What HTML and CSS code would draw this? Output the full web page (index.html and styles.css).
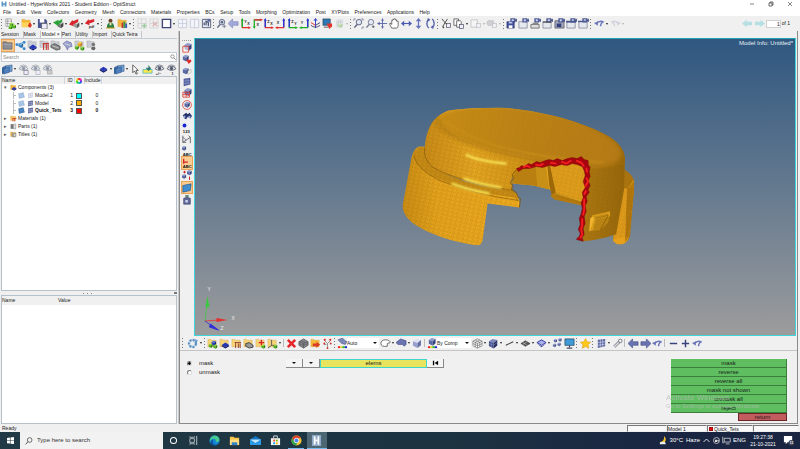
FILE: index.html
```html
<!DOCTYPE html>
<html lang="en">
<head>
<meta charset="utf-8">
<title>Untitled - HyperWorks 2021 - Student Edition - OptiStruct</title>
<link rel="stylesheet" href="styles.css">
</head>
<body>
<header class="titlebar">
  <span class="ic logo" data-icon="hw"></span>
  <span class="title">Untitled - HyperWorks 2021 - Student Edition - OptiStruct</span>
  <button class="win" aria-label="Minimize"><svg viewBox="0 0 6 6"><path d="M1 3h4" stroke="#333" stroke-width=".6"/></svg></button>
  <button class="win" aria-label="Restore"><svg viewBox="0 0 6 6"><path d="M1 2h3v3H1zM2 2V1h3v3H4" fill="none" stroke="#333" stroke-width=".7"/></svg></button>
  <button class="win" aria-label="Close"><svg viewBox="0 0 6 6"><path d="M1 1l4 4M5 1L1 5" stroke="#333" stroke-width=".6"/></svg></button>
</header>
<nav class="menubar">
  <div class="menus"><button>File</button><button>Edit</button><button>View</button><button>Collectors</button><button>Geometry</button><button>Mesh</button><button>Connectors</button><button>Materials</button><button>Properties</button><button>BCs</button><button>Setup</button><button>Tools</button><button>Morphing</button><button>Optimization</button><button>Post</button><button>XYPlots</button><button>Preferences</button><button>Applications</button><button>Help</button></div>
</nav>
<div class="toolbar top">
  <i class="grip"></i><div class="group g-file" data-icons="new v open v save v import v export v pdf v"></div>
  <i class="grip"></i><div class="group g-user" data-icons="person folderbar v"></div>
  <i class="grip"></i><div class="group g-page" data-icons="pageadd pagedel page v split1 split2 chartsave"></div>
  <i class="grip"></i><div class="group g-view" data-icons="zoomgear left ax1 ax2 ax3 ax4 ax5 ax6 triad monred fadegrid vf"></div>
  <i class="grip"></i><div class="group g-nav" data-icons="fit mag pan hand lr ud rot"></div>
  <i class="grip"></i><div class="group g-clip" data-icons="cut copy v paste vf link vf"></div>
  <i class="grip"></i><div class="group g-cam" data-icons="cam1 cam2 cam3 cam4 cam5 cam6 cam7"></div>
  <i class="grip"></i><div class="group g-undo" data-icons="undo v redo vf"></div>
  <div class="pager">
    <button class="ic" data-icon="pgl" aria-label="Previous page"></button><button class="ic" data-icon="pgr" aria-label="Next page"></button>
    <input id="pageno" value="1" size="1"><label for="pageno">of 1</label>
  </div>
</div>
<main>
  <aside class="browser">
    <div class="tabs"><button>Session</button><button>Mask</button><button class="on">Model <span>×</span></button><button>Part</button><button>Utility</button><button>Import</button><button>Quick Tetra</button></div>
    <div class="viewrow group" data-icons="folderon linkcubes comps mats props asm multi sets"></div>
    <div class="search"><input type="text" placeholder="Search" aria-label="Search"><span class="ic" data-icon="search"></span></div>
    <div class="actions">
      <div class="group" data-icons="shells v eye1 eye2 eye3"></div>
      <div class="group" data-icons="comp v shells v cursor hilite eyea eyeb"></div>
    </div>
    <div class="tree">
      <table>
        <colgroup><col class="c-name"><col class="c-id"><col class="c-col"><col class="c-inc"><col></colgroup>
        <thead><tr><th>Name</th><th class="num">ID</th><th><span class="wheel"></span></th><th>Include</th><th></th></tr></thead>
        <tbody>
          <tr><td colspan="5"><div class="node"><i class="tw">▾</i><span class="ic" data-icon="fcomp"></span>Components (3)</div></td></tr>
          <tr><td><div class="node leaf"><span class="ic" data-icon="shell0"></span><span class="ic" data-icon="mesh0"></span>Model.2</div></td><td class="num">1</td><td><b class="sw cyan"></b></td><td class="mid">0</td><td></td></tr>
          <tr><td><div class="node leaf"><span class="ic" data-icon="shell0"></span><span class="ic" data-icon="mesh1"></span>Model</div></td><td class="num">2</td><td><b class="sw amber"></b></td><td class="mid">0</td><td></td></tr>
          <tr class="cur"><td><div class="node leaf"><span class="ic" data-icon="shell1"></span><span class="ic" data-icon="mesh1"></span>Quick_Tets</div></td><td class="num">3</td><td><b class="sw red"></b></td><td class="mid">0</td><td></td></tr>
          <tr><td colspan="5"><div class="node"><i class="tw">▸</i><span class="ic" data-icon="fmat"></span>Materials (1)</div></td></tr>
          <tr><td colspan="5"><div class="node"><i class="tw">▸</i><span class="ic" data-icon="part"></span>Parts (1)</div></td></tr>
          <tr><td colspan="5"><div class="node"><i class="tw">▸</i><span class="ic" data-icon="title"></span>Titles (1)</div></td></tr>
        </tbody>
      </table>
    </div>
    <div class="splitter"><span></span><b></b></div>
    <div class="entity"><div class="ehead"><span>Name</span><span>Value</span></div></div>
  </aside>
  <section class="work">
    <div class="stage">
      <div class="sidebar"><i class="hgrip"></i><div class="group" data-icons="s1 s2 s3 s4 s5 s6 bino s123 saxis sabc sabcon sfind splane sjar"></div></div>
      <div class="viewport">
        <svg class="scene" viewBox="195 39 601 297" preserveAspectRatio="xMidYMid meet">
          <defs>
            <pattern id="mesh" width="5" height="4" patternUnits="userSpaceOnUse" patternTransform="rotate(12)"><path d="M0 0h5M0 4L2.500 0L5 4M0 2h5M1.250 2L2.500 4L3.750 2" fill="none" stroke="#6b4500" stroke-width=".3"/></pattern>
            <linearGradient id="wall" x1="425" x2="626" y1="0" y2="0" gradientUnits="userSpaceOnUse"><stop offset="0" stop-color="#d3921a"/><stop offset=".25" stop-color="#f0af24"/><stop offset=".55" stop-color="#d69616"/><stop offset=".8" stop-color="#b07a12"/><stop offset="1" stop-color="#98680b"/></linearGradient>
            <linearGradient id="rim" x1="403" x2="520" y1="0" y2="0" gradientUnits="userSpaceOnUse"><stop offset="0" stop-color="#d39416"/><stop offset=".3" stop-color="#f0ac20"/><stop offset="1" stop-color="#fab422"/></linearGradient>
            <linearGradient id="lid" x1="435" x2="620" y1="110" y2="165" gradientUnits="userSpaceOnUse"><stop offset="0" stop-color="#cb8f18"/><stop offset=".5" stop-color="#bd8318"/><stop offset="1" stop-color="#b87c12"/></linearGradient>
            <filter id="soft"><feGaussianBlur stdDeviation="1.1"/></filter>
            <filter id="softer"><feGaussianBlur stdDeviation="2"/></filter>
            <clipPath id="domeclip"><path d="M425 147C427 131 431 118 448 111Q466 108 500 108C542 110 589 124 612 138Q625 147 626 158L625 190L617 235Q600 241 583 242L586 205L589 175L586 161L545 164L517 170L512 180L513 192Q466 184 439 172Q421 162 425 147Z"/></clipPath>
          </defs>
          <path d="M625 170Q634 175 635 182L635 190L631 237Q628 245 621 245L614 241L618 190Z" fill="#a97410"/>
          <path d="M619 188l9 1q4-4 7-9l0 8-5 49q-2 8-8 8h-4l-4-3z" fill="#e6a01c"/>
          <path d="M628 189q5-4 7-8v9l-5 47-4 6z" fill="#b67a0e"/>
          <path d="M514 166L586 160L588 180L583 205L556 198L551 190L534 186L513 184Z" fill="#e6a31d"/>
          <path d="M514 168L546 164L549 189L534 186L513 184Z" fill="#b98011"/>
          <path d="M536 165L546 164L550 190L538 187Z" fill="#c99018"/>
          <path d="M548 166l3 1 6 29-4 2-3-12z" fill="#9c6808"/>
          <path d="M551 196l5-3 27 9v4l-28-6z" fill="#b67b0c"/>
          <path d="M556 194l27 8" fill="none" stroke="#f3bf3c" stroke-width=".6"/>
          <path d="M425 147C427 131 431 118 448 111Q466 108 500 108C542 110 589 124 612 138Q625 147 626 158L625 190L617 235Q600 241 583 242L586 205L589 175L586 161L545 164L517 170L512 180L513 192Q466 184 439 172Q421 162 425 147Z" fill="url(#wall)"/>
          <g clip-path="url(#domeclip)">
            <path d="M434 120Q452 104 500 106C550 110 596 126 616 142Q630 158 612 165Q590 170 552 164C505 156 462 146 442 132Q432 126 434 120Z" fill="url(#lid)" filter="url(#softer)"/>
            <path d="M446 121Q462 135 500 147Q550 160 604 163" fill="none" stroke="#cf931c" stroke-width="1.500" filter="url(#soft)"/>
          </g>
          <path d="M425 147H419Q414 149 412 157L403 205Q402 213 410 221C425 234 455 243 478 246Q482 246 483 241L488 204L520 208L520 201L513 192C476 188 445 178 431 166Q423 157 425 147Z" fill="url(#rim)"/>
          <path d="M419 147Q414 150 414 156Q417 170 440 180Q475 194 515 198L520 203L518 195L513 191C476 187 446 178 431 166Q423 157 425 147Z" fill="#cf9218"/>
          <path d="M414 156Q417 170 440 181Q475 195 519 201M425 148Q423 158 432 167Q455 181 513 191" fill="none" stroke="#7d560c" stroke-width=".6"/>
          <path d="M425 147C427 131 431 120 440 115Q440 130 470 143Q520 160 560 162L517 170L512 180L520 208L488 204L483 241Q482 246 478 246C455 243 425 234 410 221Q402 213 403 205L412 157Q414 147 425 147Z" fill="url(#mesh)" opacity=".55"/>
          <path d="M589 170L625 165L625 190L617 235Q600 241 583 242ZM552 167l35-5-4 43-27-8zM619 188l16 1-5 48-16 3z" fill="url(#mesh)" opacity=".4"/>
          <path d="M440 115Q440 130 470 143Q520 160 560 162L589 168L625 165Q628 150 612 138C589 124 542 110 500 108Q466 108 440 115Z" fill="url(#mesh)" opacity=".18"/>
          <path d="M466 155Q480 162 507 164M464 179Q480 185 502 188M452 184Q466 190 490 194" fill="none" stroke="#fff15f" stroke-width="2.200" filter="url(#soft)"/>
          <path d="M591 219l4-4 16-2-2 10-8 8-10 1z" fill="#b98314"/><path d="M591 219l4-3-1 14-4 2z" fill="#f0b52d"/><path d="M593 217l17-4v3l-14 3-4 12" fill="none" stroke="#d79b1b" stroke-width="2"/><path d="M596 219l13-3-8 15" fill="none" stroke="#6d4903" stroke-width=".5"/>
          <path d="M517 170l-4 5 1 4-3 4 2 3-1 4 5 3 1 4 3 2-1 9" fill="none" stroke="#775009" stroke-width=".8"/>
          <path d="M517 169L520 168L522 166L525 167L529 164L532 165L537 162L541 163L546 161L550 160L554 161L558 159L563 161L568 159L573 158L578 159L582 157L585 160L589 161L589 165L591 168L590 172L591 177L589 181L591 186L589 190L590 193L587 197L588 202L586 206L587 212L585 217L586 224L584 229L585 235L583 238L584 242L580 241L577 240L580 237L581 234L579 230L581 225L580 219L582 214L583 209L582 203L584 198L583 193L586 188L584 182L586 176L585 171L583 167L578 165L573 164L568 166L562 165L556 167L550 166L543 168L537 167L530 169L524 169L519 172Z" fill="#a8060f" stroke="#6e0006" stroke-width=".4"/>
          <path d="M524 168l3-2 4 2M536 165l5 1 3-2M551 163l6 1M562 162l5 2 5-3M577 161l5 2 3 4M587 168l1 5M587 178l2 4-3 5M587 191l-2 4M585 199l0 11-1 6M583 219l0 7-1 4 1 5-2 4" fill="none" stroke="#f51f22" stroke-width="1.800"/>
          <g fill="none" stroke-width=".8"><path d="M204.500 322l2-16" stroke="#41c541"/><path d="M204.500 322l13-1" stroke="#f03030"/><path d="M204.500 322l7 5" stroke="#3535e0"/></g>
          <path d="M205 308l2-11 2 11z" fill="#38cc3c"/><path d="M216 319l11 2-11 2z" fill="#e63030"/><path d="M210 325l8 6-9-3z" fill="#3030d8" stroke="#3030d8"/>
          <g class="axis"><text x="207" y="292">Y</text><text x="231" y="321">X</text><text x="220" y="331">Z</text></g>
        </svg>
        <span class="info">Model Info: Untitled*</span>
      </div>
    </div>
    <div class="toolbar low">
      <i class="grip"></i><div class="group b-gear" data-icons="gear v"></div>
      <i class="grip"></i><div class="group b-coll" data-icons="ymulti ycomp ymat yprop yload yaxis v"></div>
      <i class="rule"></i><div class="group b-edit" data-icons="xred greycube ydel nodes"></div>
      <i class="grip"></i><div class="combo auto"><span class="ic" data-icon="autoc"></span><select aria-label="Geometry colour"><option>Auto</option></select></div>
      <div class="group b-geo" data-icons="lasso v shaded v cubel"></div>
      <i class="rule"></i><div class="combo bycomp"><span class="ic" data-icon="compc"></span><select aria-label="Element colour"><option>By Comp</option></select></div>
      <div class="group b-elem" data-icons="wire v cubed v line v diamond v diamondb v shrink monitor"></div>
      <i class="grip"></i><div class="group b-star" data-icons="star"></div>
      <i class="grip"></i><div class="group b-tool" data-icons="mesh4 v wrench"></div>
      <i class="rule"></i><div class="group b-hist" data-icons="bl br undo"></div>
      <i class="rule"></i><div class="group b-hist" data-icons="minus plus undo"></div>
    </div>
    <div class="panel">
      <form class="radios"><label><input type="radio" name="m" checked>mask</label><label><input type="radio" name="m">unmask</label></form>
      <div class="selector"><button class="raised pick" aria-label="Selector mode"></button><button class="raised pick" aria-label="Entity type"></button><button class="elems">elems</button><button class="raised" aria-label="Reset"><svg viewBox="0 0 8 6"><path d="M1 .5h1.500v5H1zM7 .5v5L3 3z"/></svg></button></div>
      <div class="commands"><button>mask</button><button>reverse</button><button>reverse all</button><button>mask not shown</button><button>unmask all</button><button>reject</button><button class="return">return</button></div>
      <div class="watermark"><strong>Activate Windows</strong><span>Go to Settings to activate Windows.</span></div>
    </div>
  </section>
</main>
<footer class="status"><span class="ready">Ready</span><span class="cell"></span><span class="cell">Model 1</span><span class="cell wide"><b></b>Quick_Tets</span><span class="cell wide"></span></footer>
<div class="taskbar">
  <button class="start ic" data-icon="win" aria-label="Start"></button>
  <div class="find"><span class="ic" data-icon="tsearch"></span><input type="text" placeholder="Type here to search" aria-label="Type here to search"></div>
  <div class="apps group" data-icons="cortana taskview edge files mail store chrome hwapp"></div>
  <div class="tray"><span class="ic" data-icon="moon"></span><span>30°C</span><span>Haze</span><span class="ic" data-icon="chev"></span><span class="ic" data-icon="meet"></span><span class="ic" data-icon="net"></span><span>ENG</span></div>
  <div class="clock"><span>19:27:38</span><span>21-10-2021</span></div>
  <button class="ic note" data-icon="note" aria-label="Notifications"></button>
</div>
<script src="script.js"></script>
</body>
</html>
```
FILE: styles.css
```css
* { box-sizing: border-box; }
body { margin: 0; height: 100vh; display: flex; flex-direction: column; overflow: hidden; background: #f0f0f0; color: #1a1a1a; font: 5px/7px "Liberation Sans", Arial, sans-serif; }
button, input, select { font: inherit; color: inherit; border: 0; padding: 0; margin: 0; background: none; border-radius: 0; outline: 0; }
button, span { white-space: nowrap; }
svg { display: block; }

.ic { display: flex; align-items: center; justify-content: center; flex: none; width: 12px; }
.ic svg { width: 11px; height: 11px; flex: none; }
.group { display: flex; align-items: center; }
.group > .ic { flex: 1 1 0; width: auto; min-width: 0; height: 100%; }
.drop { flex: none; width: 4px; display: flex; align-items: center; justify-content: center; }
.drop::after { content: ""; border: 1px solid transparent; border-top: 2px solid #222; border-bottom: 0; }
.drop.faded { opacity: .3; }
.grip { flex: none; width: 4px; height: 10px; background: repeating-linear-gradient(#777 0 1px, transparent 1px 3px) 1px 0 / 1px 100% no-repeat; }
.rule { flex: none; width: 4px; height: 8px; background: linear-gradient(#bbb, #bbb) 1px 0 / 1px 100% no-repeat; }

.titlebar { display: flex; align-items: center; height: 8px; background: #fff; padding-right: 1px; }
.logo { width: 8px; }
.logo svg { width: 6px; height: 6px; }
.title { flex: 1; padding-left: 1px; }
.win { width: 19px; display: flex; justify-content: center; }
.win svg { width: 6px; height: 6px; }
.menubar { height: 8px; padding: 1px 3px 0; background: #fff; }
.menus { display: flex; justify-content: space-between; max-width: 427px; }

.toolbar { display: flex; align-items: center; }
.toolbar .group { height: 100%; }
.top { height: 15px; }
.g-file { width: 96px; }
.g-user { width: 28px; }
.g-page { width: 76px; }
.g-view { width: 133px; }
.g-nav { width: 83px; }
.g-clip { width: 62px; }
.g-cam { width: 83px; }
.g-undo { width: 32px; }
.pager { margin-left: auto; display: flex; align-items: center; padding-right: 10px; }
.pager input { width: 15px; height: 8px; background: #fff; border: 1px solid #d0d0d0; text-align: right; }
.pager label { padding-left: 1px; }

main { flex: 1; display: flex; min-height: 0; }
.browser { flex: none; width: 179px; display: flex; flex-direction: column; padding: 0 1px; border-right: 1px solid #c8c8c8; }
.tabs { display: flex; height: 8px; flex: none; border-bottom: 1px solid #c6ccd2; }
.tabs button { flex: none; padding: 0 4px 0 0; border-right: 1px solid #c0c6cc; text-align: left; }
.tabs .on { padding: 0 1px; background: #fafafa; }
.viewrow { height: 13px; flex: none; width: 96px; }
.group > .lit { background: #fbcd92; border: 1px solid #e9a354; }
.search { display: flex; align-items: center; height: 10px; flex: none; border: 1px solid #c3ccd4; background: #fff; }
.search input { flex: 1; padding-left: 1px; }
.search input::placeholder { color: #888; }
.search .ic { width: 6px; }
.search svg { width: 6px; height: 6px; }
.actions { display: flex; justify-content: space-between; height: 14px; flex: none; }
.actions .ic { flex: 0 0 12px; }
.tree { height: 215px; flex: none; background: #fff; border: 1px solid #b4c0ca; }
.tree table { width: 100%; height: 61px; border-collapse: collapse; table-layout: fixed; }
.tree th, .tree td { padding: 0; text-align: left; font-weight: normal; height: 7px; line-height: 7px; }
.tree th { background: #f0f0f0; border-right: 1px solid #d0d6dc; }
.tree th:last-child { border: 0; }
.tree .c-name { width: 62px; }
.tree .c-id { width: 10px; }
.tree .c-col { width: 10px; }
.tree .c-inc { width: 17px; }
.tree .num { text-align: right; padding-right: 1px; }
.tree .mid { text-align: center; padding-left: 9px; }
.tree .cur td { font-weight: bold; }
.wheel { display: block; width: 6px; height: 6px; margin: 0 auto; border-radius: 50%; background: radial-gradient(#ddd 1px, transparent 1px), conic-gradient(#e22, #e2c, #24e, #2cc, #2c2, #ee2, #e22); }
.node { display: flex; align-items: center; height: 7px; white-space: nowrap; }
.node .ic { width: 8px; margin-right: 1px; }
.node .ic svg { width: 7px; height: 7px; }
.tw { width: 7px; font-style: normal; text-align: center; color: #555; }
.leaf { padding-left: 15px; background: linear-gradient(#bbb, #bbb) 11px 3px / 3px 1px no-repeat, linear-gradient(#bbb, #bbb) 11px 0 / 1px 100% no-repeat; }
.sw { display: block; width: 6px; height: 6px; margin: 0 auto; border: 1px solid #555; }
.cyan { background: #0ff; }
.amber { background: #ffae00; }
.red { background: #f00; }
.splitter { height: 4px; flex: none; display: flex; align-items: center; }
.splitter span { flex: 1; height: 1px; background: repeating-linear-gradient(90deg, #888 0 1px, transparent 1px 4px) 50% 0 / 9px 1px no-repeat; }
.splitter b { width: 3px; height: 2px; background: #777; }
.entity { flex: 1; background: #fff; border: 1px solid #b4c0ca; }
.ehead { display: grid; grid-template-columns: 56px 1fr; height: 9px; line-height: 9px; background: #f0f0f0; }

.work { flex: 1; min-width: 0; display: flex; flex-direction: column; margin-right: 2px; border-left: 1px solid #8a8a8a; border-right: 1px solid #8a8a8a; border-bottom: 1px solid #8a8a8a; }
.stage { flex: 1; min-height: 0; display: flex; padding: 7px 1px 0 0; }
.sidebar { width: 14px; flex: none; }
.hgrip { display: block; height: 3px; margin: 1px 2px 0; background: repeating-linear-gradient(90deg, #999 0 1px, transparent 1px 2px) 0 1px / 100% 1px no-repeat; }
.sidebar .group { flex-direction: column; height: 164px; }
.sidebar .ic { width: 12px; min-height: 0; }
.sidebar svg { width: 10px; height: 10px; }
.viewport { flex: 1; position: relative; border: 1px solid #3fd5dc; border-top-color: #1fa3b3; background: linear-gradient(#2f5780, #64798f 50%, #9c9c9c); overflow: hidden; }
.scene { width: 100%; height: 100%; }
.axis { fill: #eee; font-size: 5px; }
.info { position: absolute; top: 1px; right: 2px; color: #e8eef4; font-size: 6px; }
.low { height: 14px; flex: none; padding-left: 1px; }
.low .ic { height: 12px; }
.b-gear { width: 18px; }
.b-coll { width: 75px; }
.b-edit { width: 47px; }
.b-geo { width: 44px; }
.b-elem { width: 104px; }
.b-star { width: 12px; }
.b-tool { width: 28px; }
.b-hist { width: 36px; }
.combo { display: flex; align-items: center; background: #fff; height: 10px; }
.combo .ic { width: 10px; background: #f0f0f0; }
.combo select { flex: 1; min-width: 0; appearance: none; height: 10px; }
.combo::after { content: ""; border: 2px solid transparent; border-top-color: #111; border-bottom: 0; margin-right: 2px; }
.auto { width: 42px; }
.bycomp { width: 44px; }

.panel { position: relative; flex: none; height: 73px; display: grid; grid-template-columns: 106px 1fr 116px; padding: 8px 10px 0 0; border-top: 1px solid #c4c4c4; font-size: 6px; align-items: start; }
.radios { padding-left: 7px; }
.radios label { display: flex; align-items: center; gap: 7px; height: 9px; }
.radios input { appearance: none; width: 5px; height: 5px; border-radius: 50%; background: #fff; border: 1px solid #777; border-right-color: #ddd; border-bottom-color: #ddd; }
.radios input:checked { background: radial-gradient(#111 1px, #fff 2px); }
.selector { display: flex; height: 9px; }
.raised { width: 17px; display: flex; align-items: center; justify-content: center; background: #f4f4f4; border-right: 1px solid #888; border-bottom: 1px solid #888; }
.pick::after { content: ""; border: 2px solid transparent; border-top-color: #111; border-bottom: 0; }
.raised svg { width: 7px; height: 6px; }
.elems { width: 107px; background: #e8e45e; border: 1px solid #3fd5c8; line-height: 7px; }
.commands { display: flex; flex-direction: column; }
.commands button { height: 9px; line-height: 8px; background: #5fbf60; border-bottom: 1px solid #3c7f3d; border-right: 1px solid #3c7f3d; }
.commands .return { align-self: flex-end; width: 49px; height: 8px; line-height: 6px; background: #c25c5e; border: 1px solid #6c2628; }
.watermark { position: absolute; right: 0; top: 42px; width: 131px; display: flex; flex-direction: column; color: #b8b8b8; opacity: .7; pointer-events: none; }
.watermark strong { font-size: 8px; line-height: 10px; font-weight: normal; }

.status { display: flex; height: 8px; flex: none; padding: 1px 1px 0 2px; }
.ready { flex: 1; }
.cell { width: 40px; height: 7px; line-height: 6px; border: 1px solid #777; border-right-color: #eee; border-bottom-color: #eee; background: #f8f8f8; display: flex; align-items: center; }
.wide { width: 46px; }
.cell b { width: 4px; height: 4px; background: #e01010; margin: 0 1px; border: 1px solid #a01010; }

.taskbar { height: 17px; flex: none; display: flex; align-items: center; background: linear-gradient(90deg, #213a45, #1c3341 55%, #1a2542 85%); color: #fff; }
.taskbar .start { width: 20px; }
.taskbar .start svg { width: 7px; height: 7px; }
.find { display: flex; align-items: center; width: 143px; height: 17px; background: #f2f2f2; color: #333; font-size: 6px; padding-left: 3px; }
.find input { flex: 1; padding-left: 2px; }
.find input::placeholder { color: #333; }
.find svg { width: 8px; height: 8px; }
.apps { width: 164px; height: 17px; }
.apps .open { background: linear-gradient(#76b9ed, #76b9ed) 50% 100% / 16px 1px no-repeat; }
.apps .active { background: linear-gradient(#76b9ed, #76b9ed) 50% 100% / 100% 1px no-repeat, #4c6672; }
.tray { margin-left: auto; display: flex; align-items: center; gap: 3px; padding-right: 4px; font-size: 6px; }
.tray .ic { width: 7px; }
.tray svg { width: 9px; height: 9px; }
.clock { width: 26px; display: flex; flex-direction: column; align-items: center; }
.taskbar .note { width: 24px; }
```
FILE: script.js
```js
// Icon artwork on a 12 x 12 grid.
const P = (d, f, s = 'none', w = 1) => `<path d="${d}" fill="${f}" stroke="${s}" stroke-width="${w}"/>`;
const T = (x, y, t, c = '#222', n = 4) => `<text x="${x}" y="${y}" font-size="${n}" font-weight="bold" fill="${c}">${t}</text>`;
const cube = (x, y, k = 1, a = '#8f9bcb', b = '#39457f', c = '#5a68a6') => `<g transform="translate(${x} ${y}) scale(${k})">` +
  P('M0 2L3 0L7 1L4 3.500Z', a) + P('M0 2L4 3.500V8L0 6Z', c) + P('M4 3.500L7 1V5.500L4 8Z', b) + '</g>';
const diamond = (x, y, c = '#2536b8', d = '#101a70') => `<g transform="translate(${x} ${y})">` + P('M0 2.500L4 0L8 2.500L4 5Z', c) + P('M0 2.500L4 5L8 2.500V4L4 6.500L0 4Z', d) + '</g>';
const folder = (c = '#f7d478') => P('M1 1.500h3l1 1h5v7H1z', c, '#d8a848', .5);
const green = (x, y) => cube(x, y, .6, '#8fdc3f', '#2c7d10', '#4fb31c');
const eye = (c = '#51586b') => P('M1 5Q6 0 11 5Q6 9 1 5Z', '#e8ebf2', c, .9) + `<circle cx="6" cy="4.800" r="1.800" fill="${c}"/>` + P('M2 2.500Q6-.5 10 2.500', 'none', c, .7);
const axes = (v, h, flip, a, b) => (flip
  ? P('M9.500 1V10.500H2', 'none', h, 1.300) + P('M9.500 1.500V10', 'none', v, 1.600) + P('M8 3L9.500 0L11 3z', v) + P('M3 9L0 10.500L3 12z', h) + T(2, 7, a)
  : P('M2.500 1V10.500H10', 'none', h, 1.300) + P('M2.500 1.500V10', 'none', v, 1.600) + P('M1 3L2.500 0L4 3z', v) + P('M9 9L12 10.500L9 12z', h) + T(4.500, 5, a) + T(8, 8, b));
const cam = (body, extra) => body + P('M5 .5h5v4H5zM10 2l2-1v3l-2-1z', '#5c6aa6', '#2c3668', .4) + `<circle cx="7.500" cy="2.500" r="1.200" fill="#cfd6f2"/>` + (extra || '');
const sheet = P('M1 4h9v7H1z', '#e6e8ef', '#69708c', .7);
const grid = (c, l) => P('M2 2L10 1V9L2 11Z', c) + P('M4.700 1.700V10.500M7.300 1.300V9.700M2 5L10 4M2 8L10 6.700', 'none', l, .6);
const mag = (c) => `<circle cx="6.500" cy="4.500" r="3" fill="#dfe6f4" stroke="${c}" stroke-width="1"/>` + P('M4.500 7L1.500 10.500', 'none', c, 1.600);
const doc = P('M1 1h6v8H1zM1 3.500h6M1 6h6M3 1v8', '#fff', '#777', .6);
const undo = (c) => P('M2.500 6.500Q6 2 10.500 4.500Q8 4 7 9', 'none', c, 1.600) + P('M0 5.500L4 8.500L4.500 3.500z', c);
const sq = (x, y, c) => `<rect x="${x}" y="${y}" width="4.500" height="4.500" fill="#eef" stroke="${c}" stroke-width=".7"/>`;
const rainbow = P('M1 9h2.500v2H1z', '#e22') + P('M3.500 9H6v2H3.500z', '#e8cf20') + P('M6 9h2.500v2H6z', '#2b2') + P('M8.500 9H11v2H8.500z', '#22d');

const ICONS = {
  hw: P('M1 1h3l1 10H1zM8 1h3v10H7z', '#5d9bd0') + P('M3 5h6v2H3z', '#39699a'),
  new: doc + green(5, 5) + green(8, 7) + green(4, 8),
  open: folder('#f6b632') + P('M6 7l4-2 2 3-2 3z', '#d7362a') + P('M1 5h8l-2 5H1z', '#ffd35e'),
  save: P('M1 1h8l2 2v8H1z', '#4a568f') + P('M3 1h5v4H3z', '#fff') + P('M5 6h6v6H5z', '#eef', '#555', .7),
  import: cube(5, 4, .9, '#bbb', '#444', '#777') + P('M0 5L6 2V9z', '#2aa336') + P('M5 4l5-3v3L6 7z', '#2aa336'),
  export: cube(5, 4, .9, '#ccc', '#555', '#999') + P('M0 7L4 2l1 7z', '#d8232b') + P('M3 4l7-3v3L5 7z', '#d8232b'),
  pdf: P('M0 6L4 1l1 7z', '#d8232b') + P('M3 3l7-2v3L5 6z', '#d8232b') + T(4, 11, 'pdf', '#333'),
  person: `<circle cx="6" cy="3" r="2.200" fill="#6b4324"/>` + P('M2 11Q2 5 6 5Q10 5 10 11z', '#2f7f42') + P('M5 5h2v3H5z', '#f3e0b5') + P('M1 11h10', 'none', '#d9a520', 1),
  folderbar: folder('#f3b53c') + P('M5 5h2v6H5z', '#c33') + P('M7 4h2v7H7z', '#38a048') + P('M9 6h2v5H9z', '#3b5bb8'),
  pageadd: '<g opacity=".4">' + P('M1 1h9v10H1zM5 1v10M1 6h9', '#eee', '#999', .7) + P('M8 6v5M5.500 8.500h5', 'none', '#1b9b2b', 1.500) + '</g>',
  pagedel: '<g opacity=".4">' + P('M1 1h9v10H1zM5 1v10M1 6h9', '#eee', '#999', .7) + P('M4 4l5 5M9 4L4 9', 'none', '#c55', 1.200) + '</g>',
  page: P('M1.500 1.500h9v9h-9z', '#fff', '#3f4879', 1.500),
  split1: P('M1.500 1.500h9v9h-9zM1.500 6h9M6 1.500v9', '#f4f5fa', '#c8ccdd', 1),
  split2: P('M1.500 1.500h9v9h-9zM6 1.500v9', '#f4f5fa', '#c8ccdd', 1),
  chartsave: P('M1.500 1.500h9v9h-9z', '#e6e9f2', '#4a5275', .9) + P('M3.500 8V5M5.500 8V3.500L8 5v4', 'none', '#3b4468', 1.200) + P('M7 1h3v3H7z', '#5a679c'),
  zoomgear: mag('#626a86') + `<circle cx="6.500" cy="4.500" r="1.500" fill="#626a86"/>` + P('M9 7v4M7 9h4', 'none', '#626a86', .8),
  left: P('M0 6L5 1V4H11V8H5V11z', '#a3aada', '#6f78b4', .6),
  ax1: axes('#1fae28', '#e02f2f', 0, 'Y', 'X'),
  ax2: P('M2.500 11V2H10', 'none', '#1fae28', 1.400) + P('M2.500 2H9', 'none', '#e02f2f', 1.500) + P('M9 .5L12 2L9 3.500z', '#e02f2f') + P('M1 9L2.500 12L4 9z', '#1fae28') + T(5, 9, 'X'),
  ax3: axes('#2a36cf', '#e02f2f', 0, 'Z', 'X'), ax4: axes('#2a36cf', '#e02f2f', 1, 'X'),
  ax5: axes('#2a36cf', '#1fae28', 0, 'Z', 'Y'), ax6: axes('#2a36cf', '#1fae28', 1, 'Y'),
  triad: P('M6 11V1M4.500 3L6 .5L7.500 3', 'none', '#2a36cf', 1) + P('M6 8L1 5', 'none', '#e02f2f') + P('M6 8L11 5M1 8Q6 12 11 8', 'none', '#447', 1),
  monred: P('M1 1h8v7H1z', '#2d79b3', '#234', .6) + P('M5 6h6v3L8 12z', '#e2362d') + P('M2 10h5', 'none', '#555'),
  fadegrid: '<g opacity=".35">' + grid('#bcd3e2', '#777') + green(5, 6) + '</g>',
  fit: mag('#5b6380') + P('M1 3V1h2M9 1h2v2M11 9v2H9', 'none', '#5b6380', .7), mag: `<g opacity=".8">${mag('#5b6380')}</g>` + P('M9 8v3M7.500 9.500h3', 'none', '#444', .8),
  pan: P('M6 1v10M1 6h10', 'none', '#5b67a8', 1) + P('M0 6l3-2v4zM4.500 3L6 0l1.500 3zM4.500 9L6 12l1.500-3z', '#5b67a8'),
  hand: P('M3 11Q0 7 1 5.500L3 7V2.500h1.200V1.500h1.300V1H7v1h1.300v1.500H10V8Q10 10 8.500 11z', '#fff', '#444', .8),
  lr: P('M0 6l3.500-3v6zM12 6L8.500 3v6z', '#4c59b0') + P('M3 6h6', 'none', '#4c59b0', 1.200),
  ud: P('M6 0L3 3.500h6zM6 12L3 8.500h6z', '#6773bd') + P('M6 3v6', 'none', '#6773bd', 1.400),
  rot: P('M4 1Q0 6 4 11M8 1Q12 6 8 11', 'none', '#5560a8', 1.400) + P('M3 0l3 2-3 2zM9 12L6 10l3-2z', '#5560a8'),
  cut: P('M1 1l6 7M7 1L2 9', 'none', '#444', 1) + sq(6, 6, '#445') + P('M2 9l1 2', 'none', '#444', 1.500),
  copy: P('M1 1h5v7H1z', '#fff', '#444', .8) + P('M4 3h4l1 1v6H4z', '#fff', '#444', .8) + sq(7, 7, '#445'),
  paste: '<g opacity=".3">' + P('M1 2h7v8H1z', '#fff', '#555', .9) + sq(7, 6, '#445') + '</g>',
  link: '<g opacity=".3">' + P('M1 6Q1 2 5 3H8V8H5Q2 9 1 6Z', '#889', '#556', .9) + sq(7, 6, '#445') + '</g>',
  cam1: cam('', P('M1 4h8v7H1z', '#43509a', '#222c66', .6) + P('M3 8h4v3H3z', '#fff') + P('M3 4h4v2H3z', '#b9c2ea')), cam2: cam(sheet), cam3: cam(P('M1 7h9v4H1z', '#ddd', '#555', .8) + P('M3 5h6v2H3z', '#888')),
  cam4: cam(sheet, P('M1 4h9v1H1z', '#333')), cam5: cam(P('M1 3h10v8H1z', '#a3a7b8', '#556', .8), P('M3 6h5v4H3z', '#34417f')), cam6: cam(sheet, P('M0 3h11v2H0z', '#4b578f')), cam7: cam(sheet, P('M0 3h9v1.500H0z', '#4b578f')),
  undo: undo('#6b77ba'), redo: `<g opacity=".3" transform="matrix(-1 0 0 1 12 0)">${undo('#8890b5')}</g>`,
  pgl: P('M0 6L5 2V4H11V8H5V10z', '#b5dfe3'), pgr: P('M12 6L7 2V4H1V8H7V10z', '#b5dfe3'),
  folderon: P('M1 2h4l1 1h5v7H1z', '#8e8f96', '#55565c', .6) + P('M1.500 5h9', 'none', '#bbb', .6),
  linkcubes: cube(4, 3, .7, '#8cbbe8', '#1a5b9e', '#3d86c7') + `<circle cx="2" cy="5" r="1.500" fill="#3484c6"/><circle cx="10" cy="2.500" r="1.500" fill="#3484c6"/><circle cx="10" cy="9.500" r="1.500" fill="#3484c6"/>` + P('M2 5l8-2.500M2 5l8 4.500', 'none', '#3484c6', .7),
  comps: P('M1 1h4l1 1h4v6H1z', '#c9ccd4', '#999', .4) + diamond(2.500, 5),
  mats: P('M1 1h4l1 1h4v6H1z', '#c9ccd4', '#999', .4) + P('M4 4h7M5 4v7M8 5v6M10 5v6', 'none', '#c73a32', 1.200), props: P('M1 1h4l1 1h4v4H1z', '#c9ccd4', '#999', .4) + P('M1 6L5 4L11 7V10L7 11L1 8Z', '#888', '#333', .7) + P('M2 6l8 3', 'none', '#eee', .6),
  asm: P('M1 4L5 1L10 3L11 7L7 8L6 11L4 7z', '#9ba2ce', '#565f98', .6) + P('M3 4l6 2', 'none', '#eee', .7),
  multi: P('M1 1h4l1 1h4v6H1z', '#c9ccd4', '#999', .4) + cube(4, 2, .7, '#ffd14a', '#c57c0a', '#eda51c') + green(1, 6) + green(7, 7),
  sets: P('M1 1h4l1 1h3v6H1z', '#c9ccd4', '#999', .4) + `<circle cx="8" cy="5" r="2" fill="#777"/><circle cx="8" cy="9" r="2.200" fill="#666"/>` + P('M5 7h6', 'none', '#ddd', .7),
  search: `<circle cx="5" cy="5" r="3.500" fill="none" stroke="#666" stroke-width="1.300"/>` + P('M8 8l3.500 3.500', 'none', '#666', 1.500),
  shells: P('M0 4l4-2v7l-4 2z', '#3a6fae', '#1e3f6e', .4) + P('M4 2l7-1v7L4 9z', '#6fa0d4', '#1e3f6e', .5) + P('M2 5l6-2v6l-6 2z', '#4f82bf', '#1e3f6e', .5),
  comp: diamond(2, 3),
  eye1: eye('#9298a6') + sq(6.500, 7, '#778'), eye2: eye('#9298a6') + sq(6.500, 7, '#aaa'), eye3: eye('#9298a6') + P('M6 7h5v4H6z', '#ccc', '#999', .6),
  cursor: P('M3 1L9 7H6.500L8 10.500L6.500 11L5 7.500L3 9.500z', '#fff', '#333', .8),
  hilite: P('M1 6h10v4H1z', '#ffe84a', '#38b8c8', .8) + P('M4 4h3V1l3 4-3 3z', '#377'),
  eyea: eye() + T(2, 12, '+/−', '#333', 4), eyeb: eye() + T(6, 12, '1', '#333', 4),
  fcomp: folder('#f3b53c') + diamond(3, 5), fmat: folder('#f7c660') + P('M4 6h7M5 6v5M8 6v5', 'none', '#c33', 1.300),
  part: P('M1 2h5v8H1z', '#777') + P('M6 2h4v8H6z', '#ddd', '#666', .7), title: folder('#e2ae52') + P('M4 4h6v6H4zM6 5v5', '#ddd', '#555', .8),
  shell0: P('M1 3L9 1L11 9L2 11z', '#a9c5e3', '#7197c2', .6), shell1: P('M1 3L9 1L11 9L2 11z', '#4b84c4', '#1e4678', .6), mesh0: grid('#c2c7dc', '#fff'), mesh1: grid('#49568f', '#dfe4fa'),
  s1: cube(3, 0, 1.200) + P('M1 4h7v7H1z', '#fff8', '#dd3e32', 1), s2: cube(1, 1, 1) + P('M5 7h6v2L8 12z', '#e02d2a'), s3: cube(1, 2, 1) + P('M7 6l4-2v4l-4 2z', '#eee', '#999', .5), s4: grid('#4d5a98', '#98a3d4'),
  s5: cube(3, 0, 1.200) + P('M1 5h8v6H1zM1 8h8M5 5v6', 'none', '#dd3e32', 1), s6: cube(3, 2, .9) + '<circle cx="6" cy="6" r="5.300" fill="none" stroke="#dd3e32" stroke-width=".9"/>',
  bino: P('M1 5l4-3 2 2 2-2 3 4-2 3-3-2-2 3-2-1z', '#28346e') + `<circle cx="3" cy="7" r="1.300" fill="#9fb0e4"/><circle cx="9" cy="7" r="1.300" fill="#9fb0e4"/>`,
  s123: `<circle cx="3" cy="3" r="2.300" fill="#1525d8"/>` + T(1, 12, '123', '#111', 5), saxis: P('M1 2v8h4M1 10l9-6v7M8 2l2 2', 'none', '#555', 1) + P('M1 4l4 3', 'none', '#448', .7),
  sabc: cube(0, 0, .7) + T(1, 11.500, 'ABC', '#111', 5), sabcon: P('M2 1v6M2 5h5', 'none', '#d02020', 1.500) + T(1, 11.500, 'ABC', '#111', 5),
  sfind: cube(0, 5, .7) + cube(6, 0, .8) + P('M3 1v3M1.500 2.500h3M9 8v4', 'none', '#d02020', 1.200), splane: P('M1 3l10-2-1 8-9 2z', '#3f8fd0', '#1c4c84', .7), sjar: P('M4 0h4v3H4z', '#687') + P('M2 4Q6 2 10 4V11H2z', '#5f6a99', '#343c66', .7) + P('M4 6h3v3H4z', '#cdd4ee'),
  gear: '<circle cx="6" cy="6" r="3.800" fill="none" stroke="#5d93c6" stroke-width="2.500" stroke-dasharray="2.500 1"/>' + P('M9 1l3 2-3 2', '#5d93c6'),
  ymulti: folder() + cube(5, 3, .7, '#4b6be0', '#14208c', '#2c42c0') + green(2, 6) + green(7, 7), ycomp: folder() + diamond(3, 5), ymat: folder() + P('M4 5h7M5 5v6M8 6v5M10 6v5', 'none', '#8c3a32', 1), yprop: folder() + P('M3 6L7 5L11 8V10L7 11L3 9Z', '#999', '#222', .8), yload: folder() + P('M7 2v6M4 5h6', 'none', '#d92222', 1.500) + green(7, 7), yaxis: folder() + P('M5 2v6l-4 3M5 8h4', 'none', '#555', 1) + green(7, 7),
  xred: P('M1 3l2-2 3 3 3-3 2 2-3 3 3 3-2 2-3-3-3 3-2-2 3-3z', '#e5262b'), greycube: P('M1 4L6 1L11 4V8L6 11L1 8z', '#84868c', '#444', .7) + P('M1 4l5 2 5-2M6 6v5M3 3l5 2M1 6l5 2 5-2', 'none', '#444', .5), ydel: folder('#f4ba38') + P('M3 6h4V4l4 3-4 4V9H3z', '#dc3b25'),
  nodes: P('M6 11V6L3 3M6 6l3-3M2 7h3', 'none', '#777', .8) + `<g fill="#d22"><circle cx="3" cy="2" r="1.200"/><circle cx="9" cy="2" r="1.200"/><circle cx="2.500" cy="6" r="1"/><circle cx="9.500" cy="6" r="1"/><circle cx="6" cy="11" r="1"/></g>`,
  autoc: P('M1 2L6 0L9 3L11 4L9 7L5 6z', '#7e88b8', '#3c4678', .5) + rainbow, compc: cube(2, 0, 1.050) + rainbow,
  lasso: P('M1 6Q1 2 6 2Q11 2 11 5L8 6L8 9Q1 10 1 6Z', '#fff', '#444', .8), shaded: P('M0 5L5 1L11 3L11 7L9 9L7 7L2 7z', '#6b75b2', '#343d77', .6), cubel: cube(1, 1, 1.250, '#dfe2f0', '#6470a5', '#98a1ce'),
  wire: P('M1 3.500L6 1L11 3.500V8.500L6 11L1 8.500zM1 3.500L6 6L11 3.500M6 6V11M1 6l5 2.500 5-2.500M3.500 2.300l5 2.500v5M8.500 2.300l-5 2.500v5', '#fff', '#555', .6), cubed: cube(1, 1, 1.300, '#7f89bd', '#262e62', '#434e8b') + P('M1 6l5 2 4-3M3.500 5v5', 'none', '#9aa3d0', .5),
  line: P('M2 8L10 4', 'none', '#444', 1.200), diamond: P('M1 6l5-3 5 3-5 3z', '#555', '#333', .6) + P('M3 7l5-3M3 5l5 3', 'none', '#ddd', .5), diamondb: P('M1 5l5-3 5 3-5 3z', '#a9b0e8', '#2a349a', 1) + P('M1 6l5 3 5-3-5 4z', '#2a349a'), shrink: cube(1, 6, .5) + cube(6, 5, .5) + cube(2, 1, .5) + cube(7, 0, .5),
  monitor: P('M1 1h10v7H1z', '#3e9bd6', '#284a66', .8) + P('M6 8v2M3 11h6', 'none', '#446', 1.200), star: P('M6 .5L7.700 4.200L11.700 4.600L8.700 7.300L9.600 11.300L6 9.200L2.400 11.300L3.300 7.300L.3 4.600L4.300 4.200Z', '#ffc91c', '#dd9a08', .6),
  mesh4: grid('#5b679f', '#e4e8fa'), wrench: P('M2.500 9.500L8 4', 'none', '#777a84', 3) + P('M2.500 9.500L8 4', 'none', '#dcdee4', 1.600) + '<circle cx="9" cy="3.200" r="2" fill="none" stroke="#777a84"/>', bl: P('M0 6L5 1V4H11V8H5V11z', '#6874b2', '#39447c', .6), br: P('M12 6L7 1V4H1V8H7V11z', '#6874b2', '#39447c', .6), minus: P('M2 6h8', 'none', '#39447c', 1.600), plus: P('M2 6h8M6 2v8', 'none', '#39447c', 1.600),
  win: P('M0 1.500L5 .8V5.600H0zM6 .7L12 0V5.600H6zM0 6.500H5V11.300L0 10.600zM6 6.500H12V12L6 11.400z', '#fff'), tsearch: `<circle cx="7" cy="4.500" r="3.500" fill="none" stroke="#333"/>` + P('M4.500 7L1 11', 'none', '#333', 1.200),
  cortana: '<circle cx="6" cy="6" r="3.300" fill="none" stroke="#fff" stroke-width="1.100"/>', taskview: P('M2 4h5v4H2zM2 1.500v1h5v-1M2 10.500v-1h5v1', 'none', '#d5dde1', .8) + P('M9.500 1v10', 'none', '#d5dde1', .9),
  edge: '<circle cx="6" cy="6" r="5.500" fill="#1687d3"/>' + P('M1 5Q2 1 6.500 .6Q11 1 11.500 5.500Q11 8 7.500 7.500Q8 4 5 4Q2 4 1 7z', '#45c98e') + P('M4 7Q4 11 9 10.500Q5 13 2 9.500Q1 6 4.500 5z', '#0b4f9e'), files: P('M1 2h4l1 1h5v8H1z', '#f9c74b') + P('M1 5h10v6H1z', '#ffdf83') + P('M3 8h6v3H3z', '#2d83ca'), mail: P('M0 5l6-4 6 4v6H0z', '#1274c4') + P('M0 5h12L6 9z', '#bfe5fb') + P('M0 5l6 4 6-4v6H0z', '#2b99e6'),
  store: P('M1 3.500h10V11H1z', '#f4f4f4') + P('M4 3.500V1h4v2.500', 'none', '#eee', .9) + P('M3.500 5h2v2h-2z', '#f25022') + P('M6.500 5h2v2h-2z', '#7fba00') + P('M3.500 8h2v2h-2z', '#00a4ef') + P('M6.500 8h2v2h-2z', '#ffb900'),
  chrome: '<circle cx="6" cy="6" r="5.500" fill="#f2c230"/>' + P('M1.200 3.300Q3 .5 6 .5Q9.500 .6 10.900 3.500H6L4 7.500z', '#e0402f') + P('M1.200 3.300L4 8.200L7 8.500L5.500 11.500Q-1 10.500 1.200 3.300z', '#32a350') + '<circle cx="6" cy="6" r="2.500" fill="#4285f4" stroke="#fff" stroke-width=".8"/>', hwapp: P('M1 0h10v12H1z', '#8da9c9') + P('M3 1l2 1v8l-2 1zM9 1L7 2v8l2 1z', '#fff') + P('M5 5h2v2H5z', '#fff'),
  moon: P('M7 0Q12 6 5 10Q1 10 1 8Q7 8 7 0z', '#ffc928') + P('M1 11q0-4 4-3 4-1 4 3z', '#e8eef6'), chev: P('M2 8l4-4 4 4', 'none', '#fff', 1.100), meet: '<circle cx="6" cy="6" r="4" fill="none" stroke="#ddd"/>' + P('M4 5h3v3H4zM7 6l2-1v3z', '#ddd'), net: P('M3 3h8v5H3zM5 10.500h5M1 1v8h2', 'none', '#ddd', 1), note: P('M1 1h9v7H5L3 10V8H1z', '#fff') + '<circle cx="9" cy="8.500" r="3" fill="#445"/>' + T(7.400, 10, '11', '#fff', 3.500)
};

const draw = (name) => `<svg viewBox="0 0 12 12" aria-hidden="true">${ICONS[name] || ''}</svg>`;
const STATE = { folderon: 'lit', sabcon: 'lit', splane: 'lit', chrome: 'open', hwapp: 'active' };

document.querySelectorAll('[data-icon]').forEach((el) => { el.innerHTML = draw(el.dataset.icon); });
document.querySelectorAll('[data-icons]').forEach((el) => {
  el.innerHTML = el.dataset.icons.split(' ').map((n) => {
    if (n === 'v' || n === 'vf') return `<button class="drop${n === 'vf' ? ' faded' : ''}" aria-label="More"></button>`;
    return `<button class="ic ${STATE[n] || ''}" aria-label="${n}">${draw(n)}</button>`;
  }).join('');
});
```
